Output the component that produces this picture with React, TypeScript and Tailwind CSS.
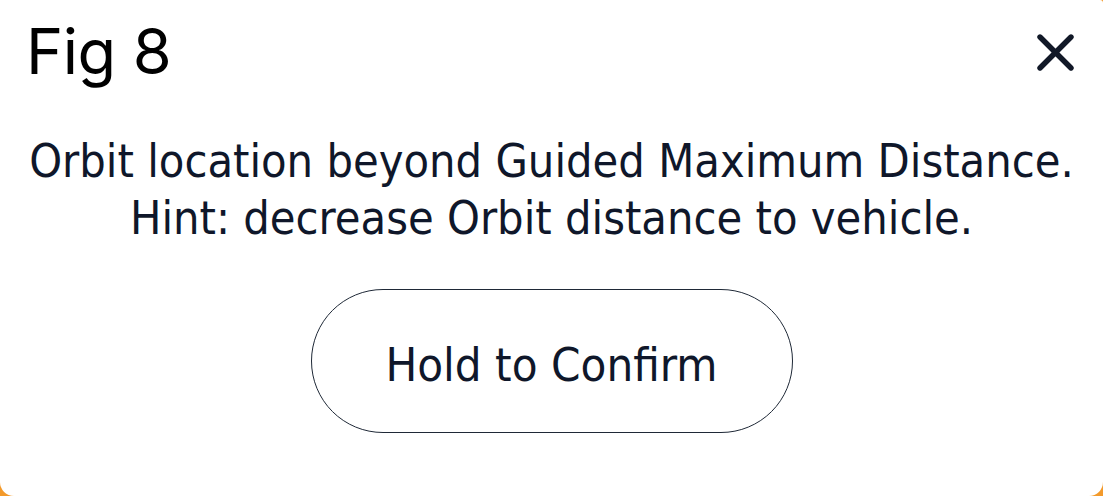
import React from 'react';

const CloseIcon: React.FC = () => (
  <svg width="37" height="37" viewBox="0 0 37 37" fill="none" stroke="#111827" strokeWidth="5.4" strokeLinecap="round">
    <path d="M3 3 L34 34" />
    <path d="M34 3 L3 34" />
  </svg>
);

export default function App() {
  return (
    <div className="w-[1103px] h-[496px] bg-[#f39a2b] overflow-hidden">
      <div className="w-full h-full bg-white rounded-b-[14px] rounded-tr-[3px] flex flex-col">
        {/* Header */}
        <div className="flex items-center justify-between pl-[26px] pr-[29px] pt-[12px] h-[90px]">
          <h1 className="text-[63px] leading-none text-black font-['Inter',sans-serif] tracking-[-0.5px]">Fig 8</h1>
          <button className="flex items-center justify-center mt-[3px]">
            <CloseIcon />
          </button>
        </div>

        {/* Message */}
        <div className="mt-[43px] text-center text-[#0f172a] text-[46.5px] leading-[57px] font-['DejaVu_Sans_Condensed','DejaVu_Sans',sans-serif]">
          <p>Orbit location beyond Guided Maximum Distance.</p>
          <p>Hint: decrease Orbit distance to vehicle.</p>
        </div>

        {/* Action */}
        <div className="flex justify-center mt-[42px]">
          <button className="w-[482px] h-[144px] pt-[8px] rounded-full border border-[#1f2937] text-[47px] text-[#0f172a] font-['DejaVu_Sans_Condensed','DejaVu_Sans',sans-serif]">
            Hold to Confirm
          </button>
        </div>
      </div>
    </div>
  );
}
